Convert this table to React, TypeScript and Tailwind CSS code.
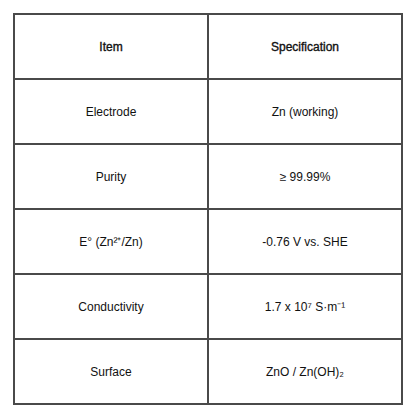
import React from 'react';

// 表格資料
const rows: [string, string][] = [
  ['Electrode', 'Zn (working)'],
  ['Purity', '≥ 99.99%'],
  ['E° (Zn²⁺/Zn)', '-0.76 V vs. SHE'],
  ['Conductivity', '1.7 x 10⁷ S·m⁻¹'],
  ['Surface', 'ZnO / Zn(OH)₂'],
];

const App: React.FC = () => {
  return (
    <div className="w-[416px] h-[416px] bg-white p-[13px] font-['Liberation_Sans',Arial,sans-serif] text-[12px] text-[#111]">
      <table className="w-[390px] h-[390px] border-collapse table-fixed border-2 border-[#4a4a4a]">
        <thead>
          <tr>
            <th className="h-[65px] border-2 border-[#4a4a4a] text-center font-normal [-webkit-text-stroke:0.35px_#111]">Item</th>
            <th className="h-[65px] border-2 border-[#4a4a4a] text-center font-normal [-webkit-text-stroke:0.35px_#111]">Specification</th>
          </tr>
        </thead>
        <tbody>
          {rows.map(([item, spec]) => (
            <tr key={item}>
              <td className="h-[65px] border-2 border-[#4a4a4a] text-center">{item}</td>
              <td className="h-[65px] border-2 border-[#4a4a4a] text-center">{spec}</td>
            </tr>
          ))}
        </tbody>
      </table>
    </div>
  );
};

export default App;
